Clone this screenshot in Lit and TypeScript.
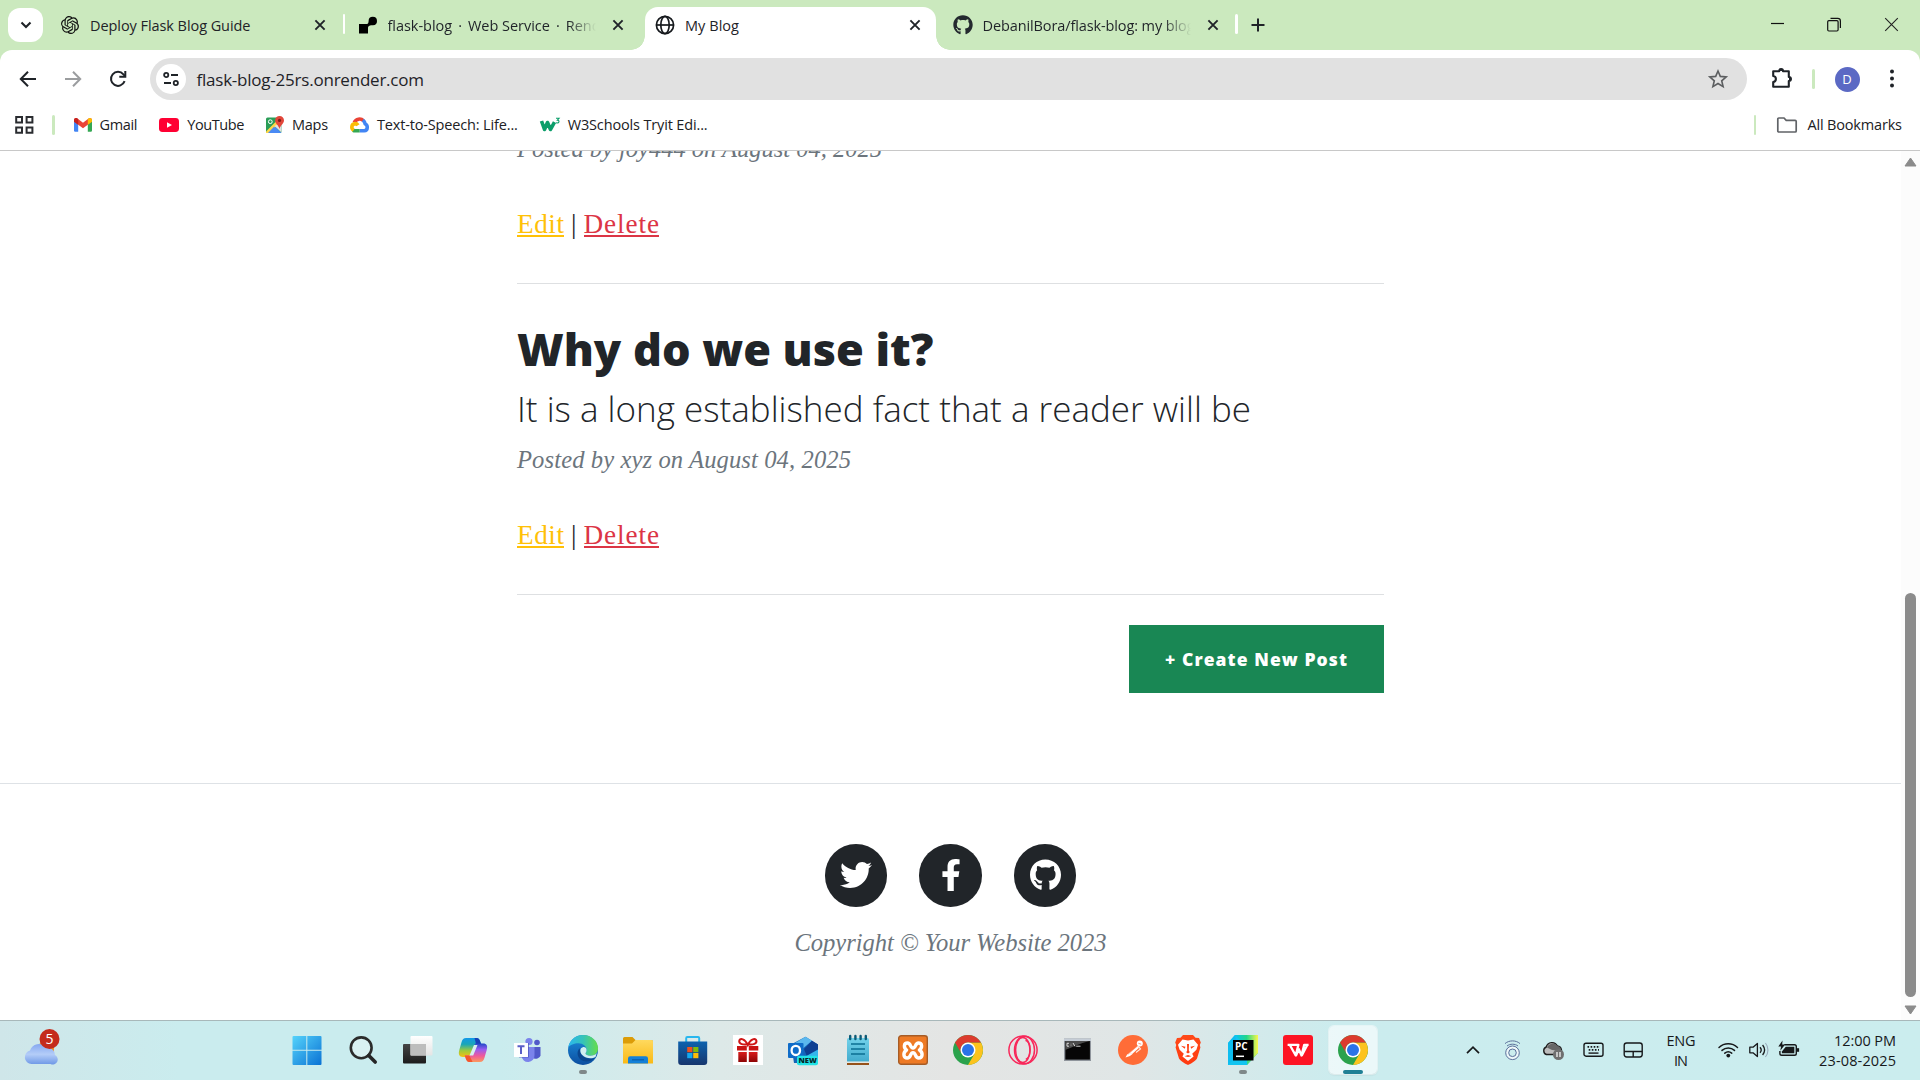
import { LitElement, html, css, svg, nothing, SVGTemplateResult } from "lit";
import { customElement } from "lit/decorators.js";

const GITHUB =
  "M165.9 397.4c0 2-2.3 3.6-5.2 3.6-3.3.3-5.6-1.3-5.6-3.6 0-2 2.3-3.6 5.2-3.6 3-.3 5.6 1.3 5.6 3.6zm-31.1-4.5c-.7 2 1.3 4.3 4.3 4.9 2.6 1 5.6 0 6.2-2s-1.3-4.3-4.3-5.2c-2.6-.7-5.5.3-6.2 2.3zm44.2-1.7c-2.9.7-4.9 2.6-4.6 4.9.3 2 2.9 3.3 5.9 2.6 2.9-.7 4.9-2.6 4.6-4.6-.3-1.9-3-3.2-5.9-2.9zM244.8 8C106.1 8 0 113.3 0 252c0 110.9 69.8 205.8 169.5 239.2 12.8 2.3 17.3-5.6 17.3-12.1 0-6.2-.3-40.4-.3-61.4 0 0-70 15-84.7-29.8 0 0-11.4-29.1-27.8-36.6 0 0-22.9-15.7 1.6-15.4 0 0 24.9 2 38.6 25.8 21.9 38.6 58.6 27.5 72.9 20.9 2.3-16 8.8-27.1 16-33.7-55.9-6.2-112.3-14.3-112.3-110.5 0-27.5 7.6-41.3 23.6-58.9-2.6-6.5-11.1-33.3 2.6-67.9 20.9-6.5 69 27 69 27 20-5.6 41.5-8.5 62.8-8.5s42.8 2.9 62.8 8.5c0 0 48.1-33.6 69-27 13.7 34.7 5.2 61.4 2.6 67.9 16 17.7 25.8 31.5 25.8 58.9 0 96.5-58.9 104.2-114.8 110.5 9.2 7.9 17 22.9 17 46.4 0 33.7-.3 75.4-.3 83.6 0 6.5 4.6 14.4 17.3 12.1C428.2 457.8 496 362.9 496 252 496 113.3 383.5 8 244.8 8z";
const TWITTER =
  "M459.37 151.716c.325 4.548.325 9.097.325 13.645 0 138.72-105.583 298.558-298.558 298.558-59.452 0-114.68-17.219-161.137-47.106 8.447.974 16.568 1.299 25.34 1.299 49.055 0 94.213-16.568 130.274-44.832-46.132-.975-84.792-31.188-98.112-72.772 6.498.974 12.995 1.624 19.818 1.624 9.421 0 18.843-1.3 27.614-3.573-48.081-9.747-84.143-51.98-84.143-102.985v-1.299c13.969 7.797 30.214 12.67 47.431 13.319-28.264-18.843-46.781-51.005-46.781-87.391 0-19.492 5.197-37.36 14.294-52.954 51.655 63.675 129.3 105.258 216.365 109.807-1.624-7.797-2.599-15.918-2.599-24.04 0-57.828 46.782-104.934 104.934-104.934 30.213 0 57.502 12.67 76.67 33.137 23.715-4.548 46.456-13.32 66.599-25.34-7.798 24.366-24.366 44.833-46.132 57.827 21.117-2.273 41.584-8.122 60.426-16.243-14.292 20.791-32.161 39.308-52.628 54.253z";
const FACEBOOK =
  "M279.14 288l14.22-92.66h-88.91v-60.13c0-25.35 12.42-50.06 52.24-50.06h40.42V6.26S260.43 0 225.36 0c-73.22 0-121.08 44.38-121.08 124.72v70.62H22.89V288h81.39v224h100.17V288z";
const OPENAI =
  "M22.2819 9.8211a5.9847 5.9847 0 0 0-.5157-4.9108 6.0462 6.0462 0 0 0-6.5098-2.9A6.0651 6.0651 0 0 0 4.9807 4.1818a5.9847 5.9847 0 0 0-3.9977 2.9 6.0462 6.0462 0 0 0 .7427 7.0966 5.98 5.98 0 0 0 .511 4.9107 6.051 6.051 0 0 0 6.5146 2.9001A5.9847 5.9847 0 0 0 13.2599 24a6.0557 6.0557 0 0 0 5.7718-4.2058 5.9894 5.9894 0 0 0 3.9977-2.9001 6.0557 6.0557 0 0 0-.7475-7.0729zm-9.022 12.6081a4.4755 4.4755 0 0 1-2.8764-1.0408l.1419-.0804 4.7783-2.7582a.7948.7948 0 0 0 .3927-.6813v-6.7369l2.02 1.1686a.071.071 0 0 1 .038.052v5.5826a4.504 4.504 0 0 1-4.4945 4.4944zm-9.6607-4.1254a4.4708 4.4708 0 0 1-.5346-3.0137l.142.0852 4.783 2.7582a.7712.7712 0 0 0 .7806 0l5.8428-3.3685v2.3324a.0804.0804 0 0 1-.0332.0615L9.74 19.9502a4.4992 4.4992 0 0 1-6.1408-1.6464zM2.3408 7.8956a4.485 4.485 0 0 1 2.3655-1.9728V11.6a.7664.7664 0 0 0 .3879.6765l5.8144 3.3543-2.0201 1.1685a.0757.0757 0 0 1-.071 0l-4.8303-2.7865A4.504 4.504 0 0 1 2.3408 7.872zm16.5963 3.8558L13.1038 8.364 15.1192 7.2a.0757.0757 0 0 1 .071 0l4.8303 2.7913a4.4944 4.4944 0 0 1-.6765 8.1042v-5.6772a.79.79 0 0 0-.407-.667zm2.0107-3.0231l-.142-.0852-4.7735-2.7818a.7759.7759 0 0 0-.7854 0L9.409 9.2297V6.8974a.0662.0662 0 0 1 .0284-.0615l4.8303-2.7866a4.4992 4.4992 0 0 1 6.6802 4.66zM8.3065 12.863l-2.02-1.1638a.0804.0804 0 0 1-.038-.0567V6.0742a4.4992 4.4992 0 0 1 7.3757-3.4537l-.142.0805L8.704 5.459a.7948.7948 0 0 0-.3927.6813zm1.0976-2.3654l2.602-1.4998 2.6069 1.4998v2.9994l-2.5974 1.4997-2.6067-1.4997Z";

const icon = (w: number, h: number, box: string, body: unknown) =>
  html`<svg width=${w} height=${h} viewBox=${box} fill="none">${body}</svg>`;

/** Text whose tracking is adjusted so that it spans the given width. */
const fit = (text: string, width: number) =>
  html`<span class="fit" data-w=${width}>${text}</span>`;

const grad = (id: string, stops: string[], x2 = 0, y2 = 1) => svg`
  <linearGradient id=${id} x1="0" y1="0" x2=${x2} y2=${y2}>
    ${stops.map((c, i) => svg`<stop offset=${i / (stops.length - 1)} stop-color=${c}></stop>`)}
  </linearGradient>`;

const chrome = svg`
  <g transform="scale(.6818) translate(-2 -2)">
    <circle cx="24" cy="24" r="22" fill="#2ba24c"/>
    <path d="M24 13H43.05A22 22 0 0 1 24 46L33.53 29.5Z" fill="#fcc31e"/>
    <path d="M4.95 13A22 22 0 0 1 43.05 13H24A11 11 0 0 0 14.47 29.5Z" fill="#dc3b2e"/>
    <circle cx="24" cy="24" r="11" fill="#fff"/><circle cx="24" cy="24" r="8.8" fill="#2a73e8"/>
  </g>`;

interface TaskApp { body: SVGTemplateResult; state?: "open" | "active" }

const apps: TaskApp[] = [
  { body: svg`${grad("win", ["#55d3fb", "#0a72d4"], 1, 1)}
    <path transform="translate(-1 0)" fill="url(#win)" d="M.5 2a1 1 0 0 1 1-1H14.3V14.8H.5ZM15.3 1H28.5a1 1 0 0 1 1 1V14.8H15.3ZM.5 15.8H14.3V30H1.5a1 1 0 0 1-1-1ZM15.3 15.8H29.5V29a1 1 0 0 1-1 1H15.3Z"/>` },
  { body: svg`<circle cx="13.2" cy="12.8" r="10.4" stroke="#2b2b2b" stroke-width="2.6" fill="#e8f6f6" fill-opacity=".5"/>
    <path d="M20.7 20.5 27.2 27" stroke="#262626" stroke-width="3.6" stroke-linecap="round"/>` },
  { body: svg`${grad("tvd", ["#454545", "#1c1c1c"])}${grad("tvl", ["#fff", "#e4e4e4"])}
    <rect x="0" y="9" width="23" height="19.5" rx="1" fill="url(#tvd)"/>
    <rect x="7.5" y="1" width="22" height="19.5" rx="1" fill="url(#tvl)"/>
    <rect x="7.5" y="9" width="15.5" height="11.5" fill="#bdbdbd"/>` },
  { body: svg`${grad("cp1", ["#1298e8", "#1aa6b8", "#9ecb3c", "#f6c012"])}${grad("cp2", ["#2049c8", "#9a5cf0", "#f05a9a", "#fb9a5c"])}
    <path d="M8 3H18.5C21 3 21.8 5 22.4 7L23.4 9.5H19C17 9.5 16.3 11 15.7 13L13 22H5C1 22 .2 19 1.3 15L3.6 7C4.4 4.3 5.6 3 8 3Z" fill="url(#cp1)"/>
    <path d="M16.5 3H18.5C21 3 21.8 5 22.6 7.5L23.5 9.5H18.2Z" fill="#1740b8"/>
    <path d="M22 27H11.5C9 27 8.3 25 7.6 23L6.8 20.5H11C13 20.5 13.7 19 14.3 17L17 8.5H25C29 8.5 29.8 11 28.7 15L26.4 23C25.6 25.7 24.4 27 22 27Z" fill="url(#cp2)"/>
    <path d="M11.5 27C9 27 8.3 25 7.6 23L6.8 20.5H11.4L14.6 27Z" fill="#f4562e"/>
    <path d="M16 10H19.5L15.2 20.5H11.5Z" fill="#d8eef2"/>` },
  { body: svg`<circle cx="16" cy="6.5" r="3.6" fill="#7b83eb"/><circle cx="24" cy="7.5" r="2.8" fill="#5059c9"/>
    <path d="M19 12H27.5V20.5A5 5 0 0 1 19 22Z" fill="#5059c9"/>
    <path d="M9.5 12H21.5V20A6.5 6.5 0 0 1 8.5 21Z" fill="#7b83eb"/>
    <path d="M3.5 8H16V22.5H6Z" fill="#4b53bc" opacity=".7"/>
    <rect x="1" y="8" width="14" height="14" fill="#fff"/>
    <path d="M4.5 11.3H11.5M8 11.3V19" stroke="#5b5fc7" stroke-width="2"/>`  },
  { state: "open", body: svg`${grad("ed1", ["#2bb8ef", "#35c3b8", "#66dd4a"], 1, 0)}${grad("ed2", ["#1b8fdd", "#0c4ea0"])}
    <circle cx="15" cy="15" r="15" fill="url(#ed2)"/>
    <path d="M.3 12.5C1.5 5 7.5 0 15 0 23.5 0 30 6 30 13.2 30 18 26.7 20.8 22.5 20.8 19.6 20.8 17.5 19.8 17.5 18.6 17.5 17.6 18.6 17.3 18.6 15 18.6 11.3 14.9 8.3 10.6 8.3 6 8.3 2 10 .3 12.5Z" fill="url(#ed1)"/>
    <path d="M11.8 13.2C9.6 15 9 18 10 21 11.7 26 17.5 27.8 24 25.2L28 22C26 24 24 23.6 20.8 23.4 15.6 23 12 19.5 11.8 13.2Z" fill="#0a468f"/>
    <path d="M18.6 15C18.6 17.3 17.5 17.6 17.5 18.6 17.5 19.8 19.6 20.8 22.5 20.8 25 20.8 27.4 19.8 28.8 18.1L27.5 22C23.5 24.3 17.7 23.5 14.3 20 11.5 17 11.8 12.8 14.8 12.2 17 11.8 18.6 13 18.6 15Z" fill="#d0eef0"/>` },
  { body: svg`${grad("fx", ["#ffd95e", "#f9b916"])}
    <path d="M0 3.5a1.5 1.5 0 0 1 1.5-1.5H9.5L12.5 5H28.5a1.5 1.5 0 0 1 1.5 1.5V12H0Z" fill="#dc9c08"/>
    <path d="M0 8.5H9L12.5 5H28.5A1.5 1.5 0 0 1 30 6.5V28.5H0Z" fill="url(#fx)"/>
    <path d="M5 28.5V23.5A2.2 2.2 0 0 1 7.2 21.3H22.8A2.2 2.2 0 0 1 25 23.5V28.5Z" fill="#1480d8"/>
    <path d="M9 24.8H21" stroke="#0b5ba8" stroke-width="1.2"/>` },
  { body: svg`${grad("st", ["#0d62ae", "#17366e"])}
    <path d="M8.2 7V3.2A1.2 1.2 0 0 1 9.4 2H20A1.2 1.2 0 0 1 21.2 3.2V7" stroke="#28b7ee" stroke-width="2"/>
    <path d="M.2 6.5H29.2V27A3 3 0 0 1 26.2 30H3.2A3 3 0 0 1 .2 27Z" fill="url(#st)"/>
    <path d="M9.2 12H14.4V17.2H9.2Z" fill="#f1511b"/><path d="M15.2 12H20.4V17.2H15.2Z" fill="#80bb0a"/>
    <path d="M9.2 18H14.4V23.2H9.2Z" fill="#14a9f0"/><path d="M15.2 18H20.4V23.2H15.2Z" fill="#fcbc09"/>` },
  { body: svg`${grad("gf", ["#d81c1c", "#8d0505"])}<rect width="30" height="30" fill="#fff"/>
    <path d="M14.8 10C12 3.5 7 2.8 6.3 5.8 5.7 8.5 9 10 14.8 9.2 20.5 10 24 8.5 23.4 5.8 22.6 2.8 17.6 3.5 14.8 10Z" stroke="#cf1616" stroke-width="2"/>
    <path d="M4 11H13.8V15.5H4ZM15.8 11H25.3V15.5H15.8Z" fill="#c91414"/>
    <path d="M5.3 17H13.8V27H5.3ZM15.8 17H24.5V27H15.8Z" fill="url(#gf)"/>` },
  { body: svg`<path d="M3 9.5 17.5 1.8 30 9.5V25A3 3 0 0 1 27 28H6Z" fill="#1565b8"/>
    <path d="M7 8 17.5 1.8 24 5.8 13 15Z" fill="#5ab8ee"/><path d="M16 14 24 5.8 30 9.5V17L20 24Z" fill="#0d3f92"/>
    <path d="M13 24 30 14.5V28H13Z" fill="#35b5ec"/>
    <rect x="0" y="8" width="15.5" height="15" rx="1" fill="#0f6cc8"/>
    <ellipse cx="7.8" cy="15.4" rx="4.2" ry="4.6" stroke="#fff" stroke-width="2.3"/>
    <rect x="9" y="20.8" width="21" height="9.4" rx="2" fill="#22e3e6"/>
    <text x="19.6" y="28.2" class="tiny" text-anchor="middle">NEW</text>` },
  { body: svg`${grad("np", ["#73d2ea", "#3fa9cc"])}
    <rect x="4" y="3" width="22" height="25" rx="1.5" fill="url(#np)"/>
    <path d="M7.2 1V4M12.4 1V4M17.6 1V4M22.8 1V4" stroke="#0d5b77" stroke-width="2.4" stroke-linecap="round"/>
    <path d="M8 9H22M8 14H22M8 19H22" stroke="#0b6f92" stroke-width="1.6"/>
    <path d="M4 27.2H26" stroke="#f3efe6" stroke-width="1.4"/><path d="M4 29H26" stroke="#96521a" stroke-width="2"/>` },
  { body: svg`<rect x=".7" y=".7" width="28.6" height="28.6" rx="2.6" fill="#ee7a25" stroke="#a65c26" stroke-width="1.4"/>
    <path d="M9.6 8C5.6 8 5.4 12.6 8.6 15 4.8 17.4 5 23 9.4 23 13 23 12 17.8 15 17.8 18 17.8 17 23 20.6 23 25 23 25.2 17.4 21.4 15 24.6 12.6 24.4 8 20.4 8 17 8 18 13 15 13 12 13 13 8 9.6 8Z" stroke="#fff" stroke-width="3.4" stroke-linejoin="round"/>` },
  { body: chrome },
  { body: svg`<g stroke="#f8285a" stroke-width="1.5"><circle cx="15" cy="15" r="14.1"/><ellipse cx="16.5" cy="15" rx="10" ry="13.8"/><ellipse cx="14.8" cy="15" rx="7.2" ry="12.4"/><path d="M17.5 5.2C23.5 7 23.5 22 17.8 24.4"/></g>` },
  { body: svg`<rect x="1" y="3.5" width="27" height="22.5" fill="#8f959c"/><rect x="1" y="3.5" width="27" height="2.5" fill="#c5cdd6"/>
    <rect x="2.3" y="6" width="24.6" height="18.6" fill="#060606"/><path d="M2.3 6H26.9C16 8.5 10 12 2.3 15Z" fill="#4b4b4b"/>
    <path d="M6 8.3H4V11.2H6M8 8.8V9.3M8 10.6V11.1M10 8L12 11.4M13.2 11.2H17.5" stroke="#e6e6e6" stroke-width=".9"/>` },
  { body: svg`<circle cx="15" cy="15" r="15" fill="#ff6c37"/>
    <path d="M19.5 11 9 19.8 7.5 22.6 12 21 21 12.8Z" fill="#fff"/><circle cx="21.8" cy="8.4" r="3" fill="#fff"/>
    <path d="M20 10.8 22.5 14 18 17.5M12.5 18.2 14 19.5" stroke="#ffe9e0" stroke-width="1.2"/><path d="M19.5 11 10 19.3" stroke="#ff6c37" stroke-width=".5"/><path d="M20.4 8.3 23.2 9.2" stroke="#ff6c37" stroke-width=".7"/>` },
  { body: svg`${grad("br", ["#ff4a1a", "#ff3a10"])}
    <path d="M10 0H20L22.5 2.8 26 3 27.8 7.5 26.8 10 27.4 12.6 24 23.5C23.2 25.3 17 29.4 15 30 13 29.4 6.8 25.3 6 23.5L2.6 12.6 3.2 10 2.2 7.5 4 3 7.5 2.8Z" fill="url(#br)"/>
    <path d="M9.5 4.5 15 5.6 20.5 4.5 25 9.8 23.4 14.8 19.2 18.8 20.6 21.5 15 26 9.4 21.5 10.8 18.8 6.6 14.8 5 9.8Z" fill="#fff"/>
    <path d="M8 10.8 12.5 11.8 11.7 13.8ZM22 10.8 17.5 11.8 18.3 13.8ZM14 9H16L15.8 15.5 16.8 17.3 15 18.5 13.2 17.3 14.2 15.5ZM11.6 21.2 15 20 18.4 21.2 15 22Z" fill="#ff4316"/>` },
  { state: "open", body: svg`${grad("pc", ["#07c3f2", "#21d789", "#fcf84a"], 1, 0)}
    <path d="M7 0H30V18L19 30H0V8Z" fill="#12c4f0"/><path d="M7 0H30V18L19 30V12Z" fill="url(#pc)"/><path d="M7 0 0 8V30L8 22V5Z" fill="#0cbdf0"/>
    <rect x="5" y="5" width="20.5" height="20.5" fill="#000"/>
    <text x="7" y="15" class="pc">PC</text><path d="M8 21.3H16" stroke="#fff" stroke-width="1.5"/>` },
  { body: svg`<rect width="30" height="30" rx="3" fill="#fd1424"/>
    <path d="M4.6 9.8H15.4L12.7 20.5 7 10.2M15.8 14.6 12.9 20.8M25.6 9.8H21.2L18.5 20.5 15.5 13.5M18.8 20.5 24.4 9.8" stroke="#fff" stroke-width="2.3" stroke-linejoin="round"/>` },
  { state: "active", body: chrome },
];

interface Tab { title: string; width: number; fade: boolean; active: boolean; fav: unknown }

const tabs: Tab[] = [
  { title: "Deploy Flask Blog Guide", width: 160.5, fade: false, active: false, fav: icon(18, 18, "0 0 24 24", svg`<path fill="#111" d=${OPENAI}/>`) },
  { title: "flask-blog \u2009·\u2009 Web Service \u2009·\u2009 Rend", width: 213, fade: true, active: false,
    fav: icon(18, 18, "0 0 18 18", svg`<path d="M0 8H7.2C9 8 9.6 7 9.6 4.9A4.2 4.2 0 1 1 14 9.2C11 9.2 9 9.6 9 11.6V17.5H0Z" fill="#000"/>`) },
  { title: "My Blog", width: 54, fade: false, active: true,
    fav: icon(20, 20, "0 0 20 20", svg`<g stroke="#16191d" stroke-width="1.7"><circle cx="10" cy="10" r="8.6"/><ellipse cx="10" cy="10" rx="4.2" ry="8.6"/><path d="M1.5 10H18.5"/></g>`) },
  { title: "DebanilBora/flask-blog: my blog", width: 212, fade: true, active: false,
    fav: icon(20, 20, "0 0 496 512", svg`<path fill="#24292f" d=${GITHUB}/>`) },
];

const bookmarks = [
  { label: "Gmail", w: 38, iw: 18, body: svg`<path d="M0 4V14.5A1.2 1.2 0 0 0 1.2 15.7H4.2V7Z" fill="#4285f4"/><path d="M18 4V14.5A1.2 1.2 0 0 1 16.8 15.7H13.8V7Z" fill="#34a853"/><path d="M0 4C0 2 2 1.4 3.4 2.4L9 6.7 14.6 2.4C16 1.4 18 2 18 4L17.8 5.8 9 12.2.2 5.8Z" fill="#ea4335"/><path d="M13.8 3 14.6 2.4C16 1.4 18 2 18 4V5.7L13.8 8.8Z" fill="#fbbc04"/><path d="M0 4C0 2 2 1.4 3.4 2.4L4.2 3V8.8L0 5.7Z" fill="#c5221f"/>` },
  { label: "YouTube", w: 57, iw: 20, body: svg`<rect y="2" width="20" height="14" rx="3.4" fill="#f03"/><path d="M8 6.2V11.8L13 9Z" fill="#fff"/>` },
  { label: "Maps", w: 36, iw: 18, body: svg`<rect y="1.5" width="15.5" height="15.5" rx="1.5" fill="#2a9d57"/><path d="M0 17 8 9.5 15.5 17Z" fill="#4a8af4"/><path d="M0 15.5 13 2.5 15.5 5 3 17H0Z" fill="#fdd649"/><path d="M8.5 10 15.5 6V16.5Z" fill="#dfe1e4"/><path d="M2 16.9 8 10.8 14 17Z" fill="#4a8af4"/><circle cx="4.3" cy="5.7" r="1.9" stroke="#fff" stroke-width="1"/><path d="M13.5 0A4.4 4.4 0 0 1 18 4.5C18 7.5 14.5 9 13.5 13 12.5 9 9.1 7.5 9.1 4.5A4.4 4.4 0 0 1 13.5 0Z" fill="#e2463a"/><circle cx="13.5" cy="4.4" r="1.6" fill="#7e1e17"/>` },
  { label: "Text-to-Speech: Life...", w: 141, iw: 19, body: svg`<g stroke-width="3.6"><path d="M4.3 6.5A5.6 5.6 0 0 1 13.5 4.8" stroke="#ea4335"/><path d="M12.8 4.3A5.5 5.5 0 0 1 15.2 7.8C18 9 18.2 14.6 14.2 14.8H9.7" stroke="#4285f4"/><path d="M9.7 14.8H5.2A3.6 3.6 0 0 1 3 14.2" stroke="#34a853"/><path d="M3.6 14.3C.8 12.3 1.4 8 5 7.6 6.5 7.6 7.4 8.2 8 9.2" stroke="#fbbc04"/></g>` },
  { label: "W3Schools Tryit Edi...", w: 140, iw: 20, body: svg`<path d="M1.5 5 4.5 13.5 7.5 6.5 10.5 13.5 14.5 6.2" stroke="#0b9e6a" stroke-width="3.6" stroke-linejoin="round"/><path d="M16 2.2H19.1L17.4 4.2C19.7 4.2 19.7 7.6 15.9 6.8" stroke="#0b9e6a" stroke-width="1.1"/>` },
];

const closeX = icon(16, 16, "0 0 16 16", svg`<path d="M3.4 3.4 12.6 12.6M12.6 3.4 3.4 12.6" stroke="#1f2328" stroke-width="1.9"/>`);

@customElement("app-root")
export class AppRoot extends LitElement {
  static styles = css`
    :host { display: block; width: 1920px; height: 1080px; overflow: hidden; background: #fff; color: #1f2328;
      font-family: "Open Sans", "Noto Sans", sans-serif; font-size: 14.5px; }
    * { box-sizing: border-box; }
    svg { display: block; flex: none; overflow: visible; }
    .screen { display: flex; flex-direction: column; height: 1080px; }
    .fit { display: inline-block; white-space: pre; }

    .strip { display: flex; height: 50px; background: #cbe9be; padding-left: 8px; }
    .search { width: 35px; height: 34px; margin: 8px 7px 0 0; border-radius: 12px; background: #fff; display: grid; place-items: center; }
    .tab { position: relative; display: flex; align-items: center; width: 290.5px; height: 43px; margin-top: 7px; padding: 0 0 7px 10px; }
    .fav { width: 20px; display: grid; place-items: center; margin-right: 10px; }
    .label { width: 208px; overflow: hidden; margin-right: 14px; padding-top: 2px; line-height: 22px; white-space: nowrap; }
    .fade { -webkit-mask-image: linear-gradient(90deg, #000 180px, transparent 208px); mask-image: linear-gradient(90deg, #000 180px, transparent 208px); }
    .active { background: #fff; border-radius: 13px 13px 0 0; }
    .active::before, .active::after { content: ""; position: absolute; bottom: 0; width: 14px; height: 14px; }
    .active::before { left: -14px; background: radial-gradient(circle at 0 0, transparent 13.5px, #fff 14px); }
    .active::after { right: -14px; background: radial-gradient(circle at 100% 0, transparent 13.5px, #fff 14px); }
    .sep { width: 7px; padding-top: 14px; display: flex; justify-content: center; }
    .bar { width: 2.5px; height: 20px; border-radius: 2px; background: #fff; }
    .newtab { margin: 18px 0 0 11px; }
    .controls { display: flex; margin: 17px 21px 0 auto; gap: 42px; }

    .toolwrap { background: #cbe9be; }
    .toolbar { height: 58px; padding: 8px 17px 0 17px; background: #fff; border-radius: 12px 12px 0 0; display: flex; align-items: flex-start; }
    .nav { display: flex; gap: 25px; padding: 11px 0 0 .5px; width: 133px; }
    .omni { width: 1597px; height: 42px; border-radius: 21px; background: #e1e1e1; display: flex; align-items: center; padding: 0 19.5px 0 6px; }
    .chip { width: 30px; height: 30px; border-radius: 50%; background: #fff; display: grid; place-items: center; margin-right: 10.5px; }
    .url { flex: 1; font-size: 17px; line-height: 26px; padding-top: 1px; }
    .right { display: flex; align-items: center; height: 42px; }
    .green { background: #cbe9be; width: 2.5px; }
    .ext { margin: 0 19.5px 2px 23.5px; }
    .avatar { width: 25px; height: 25px; border-radius: 50%; background: #5b69c4; color: #fff; font-size: 13px; line-height: 25px; text-align: center; margin: 0 30.5px 0 20px; }

    .marks { height: 43px; background: #fff; border-bottom: 1px solid #c8c8c8; display: flex; align-items: center; padding: 0 18px 8px 15px; color: #202124; }
    .marks .first { margin: 0 19px 0 18px; }
    .mark { display: flex; align-items: center; margin-right: 21.8px; line-height: 22px; }
    .mark svg { margin-right: 8px; }
    .all { margin-left: auto; display: flex; align-items: center; line-height: 22px; }
    .all svg { margin: 0 10.5px 0 21px; }

    .view { display: flex; height: 869px; }
    .page { width: 1901px; height: 869px; overflow: hidden; font-family: "Liberation Serif", serif; }
    .col { width: 867px; margin-left: 517px; }
    .meta { height: 38px; line-height: 38px; font-size: 24.6px; font-style: italic; color: #6c757d; }
    .clipped { margin-top: -21px; }
    .actions { height: 40px; line-height: 40px; margin: 36px 0 39px; font-size: 27.2px; color: #212529; display: flex; }
    .edit { color: #ffc107; }
    .del { color: #dc3545; }
    .link { position: relative; display: block; height: 40px; }
    .link::after { content: ""; position: absolute; left: 0; right: 0; top: 31px; height: 2px; background: currentColor; }
    .pipe { width: 19.5px; display: flex; justify-content: center; }
    .rule { height: 1px; background: #dee0e2; }
    .title { margin: 38px 0 0; height: 54px; font: 800 45px/54px "Open Sans", sans-serif; color: #212529; }
    .sub { margin: 11px 0 10px; font: 300 35px/44px "Open Sans", sans-serif; color: #212529; }
    .create { width: 255px; height: 68px; margin: 30px 0 0 auto; background: #198754; color: #fff; font: 800 17.5px/68px "Open Sans", sans-serif; padding-left: 36px; }
    .foot { margin-top: 90px; border-top: 1px solid #dee2e6; display: flex; flex-direction: column; align-items: center; padding-top: 60px; }
    .social { display: flex; gap: 32px; }
    .disc { width: 62.5px; height: 62.5px; border-radius: 50%; background: #212529; display: grid; place-items: center; }
    .copy { margin-top: 17.5px; }
    .scroll { width: 19px; background: #fcfcfc; display: flex; flex-direction: column; align-items: center; padding-top: 6px; }
    .thumb { width: 11px; height: 404px; border-radius: 6px; background: #8b8b8b; margin: 426px 0 8px; }

    .task { height: 60px; border-top: 1px solid #a8b8ba; display: flex; align-items: flex-start; color: #17191b;
      background: linear-gradient(90deg, #cfe6e9 0, #caecee 180px, #caecee 500px, #dde9e8 720px, #e4e5e4 950px, #e0e6e6 1130px, #cbecee 1340px, #cbedee 100%); }
    .weather { margin: 6px 220.8px 0 24px; }
    .slot { width: 55px; height: 59px; padding-top: 5px; display: flex; justify-content: center; }
    .cell { width: 48px; height: 48px; border-radius: 5px; padding: 9px 9px 0; }
    .on { background: rgba(255,255,255,.62); box-shadow: 0 0 0 1px rgba(255,255,255,.5), 0 1px 2px rgba(0,0,0,.12); }
    .pill { width: 8px; height: 4px; border-radius: 2px; background: #7f8889; margin: 5px auto 0; }
    .pill.wide { width: 20px; background: #1f8095; }
    .tiny { font: 800 7.6px "Open Sans", sans-serif; fill: #06282c; }
    .pc { font: 700 10px "Open Sans", sans-serif; fill: #fff; }
    .badge { font: 400 14px "Open Sans", sans-serif; fill: #fff; }
    .tray { flex: 1; display: flex; margin-left: 82.2px; padding-top: 19px; }
    .lang { width: 56px; text-align: center; margin: -9px 0 0 0; line-height: 20px; }
    .clock { margin: -9px 24px 0 auto; text-align: right; line-height: 20px; }
  `;

  firstUpdated() {
    // Spread each label's tracking over its characters to reach the set width.
    this.renderRoot.querySelectorAll<HTMLElement>(".fit").forEach((el) => {
      const n = (el.textContent ?? "").length;
      const natural = el.getBoundingClientRect().width;
      const step = (Number(el.dataset.w) - natural) / Math.max(1, n - 1);
      el.style.letterSpacing = `${step.toFixed(3)}px`;
      el.style.marginRight = `${(-step).toFixed(3)}px`;
    });
  }

  private actions() {
    return html`<div class="actions">
      <a class="link edit">${fit("Edit", 47)}</a><span class="pipe">|</span><a class="link del">${fit("Delete", 75.5)}</a>
    </div>`;
  }

  render() {
    return html`<div class="screen">
      <div class="strip">
        <div class="search">${icon(12, 8, "0 0 12 8", svg`<path d="M1.5 1.5 6 6 10.5 1.5" stroke="#1f2328" stroke-width="2.1"/>`)}</div>
        ${tabs.map((t, i) => html`
          <div class="tab ${t.active ? "active" : ""}">
            <span class="fav">${t.fav}</span>
            <span class="label ${t.fade ? "fade" : ""}">${fit(t.title, t.width)}</span>
            ${closeX}
          </div>
          <div class="sep">${i === 0 || i === 3 ? html`<span class="bar"></span>` : nothing}</div>`)}
        <div class="newtab">${icon(14, 14, "0 0 14 14", svg`<path d="M7 .5V13.5M.5 7H13.5" stroke="#1f2328" stroke-width="2"/>`)}</div>
        <div class="controls">
          ${icon(15, 15, "0 0 15 15", svg`<path d="M1 6.5H14" stroke="#111" stroke-width="1.2"/>`)}
          ${icon(15, 15, "0 0 15 15", svg`<rect x=".7" y="3.6" width="10.4" height="10.4" rx="1.2" stroke="#111" stroke-width="1.2"/><path d="M3.5 1.4H10.8A2.6 2.6 0 0 1 13.4 4V11" stroke="#111" stroke-width="1.2"/>`)}
          ${icon(15, 15, "0 0 15 15", svg`<path d="M1.2 1.2 13.8 13.8M13.8 1.2 1.2 13.8" stroke="#222" stroke-width="1.1"/>`)}
        </div>
      </div>

      <div class="toolwrap"><div class="toolbar">
        <div class="nav">
          ${icon(20, 20, "0 0 20 20", svg`<path d="M18 10H3M10 2.8 2.8 10 10 17.2" stroke="#1f2328" stroke-width="2"/>`)}
          ${icon(20, 20, "0 0 20 20", svg`<path d="M2 10H17M10 2.8 17.2 10 10 17.2" stroke="#9b9d9f" stroke-width="2"/>`)}
          ${icon(20, 20, "0 0 20 20", svg`<path d="M16.6 12.2A7 7 0 1 1 15.4 5.4L17 7" stroke="#1f2328" stroke-width="2"/><path d="M17.3 2V7.8H11.3" stroke="#1f2328" stroke-width="2"/>`)}
        </div>
        <div class="omni">
          <span class="chip">${icon(16, 14, "0 0 16 14", svg`<g stroke="#1f2328" stroke-width="1.8"><circle cx="3.2" cy="3" r="2.1"/><path d="M8 3H15M1 11H8"/><circle cx="12.8" cy="11" r="2.1"/></g>`)}</span>
          <span class="url">${fit("flask-blog-25rs.onrender.com", 227.5)}</span>
          ${icon(20, 20, "0 0 20 20", svg`<path d="M10 2 12.3 7.4 18.2 7.9 13.7 11.8 15.1 17.6 10 14.5 4.9 17.6 6.3 11.8 1.8 7.9 7.7 7.4Z" stroke="#5c5e60" stroke-width="1.6"/>`)}
        </div>
        <div class="right">
          <span class="ext">${icon(22, 22, "0 0 22 22", svg`<path d="M2.2 4.2H8.2C8.2 1.4 12 1.4 12 4.2H17.8V10C20.6 10 20.6 14 17.8 14V19.8H2.2V15C5.8 14.6 5.8 9.4 2.2 9Z" stroke="#1f2328" stroke-width="2.1" stroke-linejoin="round"/><path d="M8 4C8 1 12.2 1 12.2 4ZM18 9.8C21.2 9.8 21.2 14.2 18 14.2Z" fill="#1f2328"/>`)}</span>
          <span class="bar green"></span>
          <span class="avatar">D</span>
          ${icon(4, 20, "0 0 4 20", svg`<circle cx="2" cy="2.6" r="2" fill="#1f2328"/><circle cx="2" cy="9.5" r="2" fill="#1f2328"/><circle cx="2" cy="16.4" r="2" fill="#1f2328"/>`)}
        </div>
      </div></div>

      <div class="marks">
        ${icon(19, 18, "0 0 19 18", svg`<g stroke="#2a2c30" stroke-width="2"><path d="M1.2 1H7V6.4H1.2ZM11.6 1H17.4V6.4H11.6ZM1.2 11.4H7V16.8H1.2ZM11.6 11.4H17.4V16.8H11.6Z"/></g>`)}
        <span class="bar green first"></span>
        ${bookmarks.map((b) => html`<span class="mark">${icon(b.iw, 18, `0 0 ${b.iw} 18`, b.body)}${fit(b.label, b.w)}</span>`)}
        <span class="all"><span class="bar green"></span>
          ${icon(20, 16, "0 0 20 16", svg`<path d="M1.8 1H7L9.2 3.4H18.2A1 1 0 0 1 19.2 4.4V14A1 1 0 0 1 18.2 15H1.8A1 1 0 0 1 .8 14V2A1 1 0 0 1 1.8 1Z" stroke="#606367" stroke-width="1.7"/>`)}
          ${fit("All Bookmarks", 94.5)}</span>
      </div>

      <div class="view">
        <div class="page">
          <div class="col">
            <div class="meta clipped">${fit("Posted by joy444 on August 04, 2025", 365)}</div>
            ${this.actions()}
            <div class="rule"></div>
            <h2 class="title">${fit("Why do we use it?", 416.5)}</h2>
            <h3 class="sub">${fit("It is a long established fact that a reader will be", 734)}</h3>
            <div class="meta">${fit("Posted by xyz on August 04, 2025", 334)}</div>
            ${this.actions()}
            <div class="rule"></div>
            <div class="create">${fit("+ Create New Post", 182)}</div>
          </div>
          <div class="foot">
            <div class="social">
              <span class="disc">${icon(32, 32, "0 0 512 512", svg`<path fill="#fff" d=${TWITTER}/>`)}</span>
              <span class="disc">${icon(20, 32, "0 0 320 512", svg`<path fill="#fff" d=${FACEBOOK}/>`)}</span>
              <span class="disc">${icon(31, 32, "0 0 496 512", svg`<path fill="#fff" d=${GITHUB}/>`)}</span>
            </div>
            <div class="meta copy">${fit("Copyright © Your Website 2023", 312)}</div>
          </div>
        </div>
        <div class="scroll">
          ${icon(13, 10, "0 0 13 10", svg`<path d="M6.5 1 12 9H1Z" fill="#8b8b8b" stroke="#8b8b8b" stroke-linejoin="round"/>`)}
          <span class="thumb"></span>
          ${icon(13, 10, "0 0 13 10", svg`<path d="M6.5 9 12 1H1Z" fill="#8b8b8b" stroke="#8b8b8b" stroke-linejoin="round"/>`)}
        </div>
      </div>

      <div class="task">
        <div class="weather">${icon(36, 40, "0 0 36 40", svg`${grad("cl", ["#86a8f0", "#b4cdf8", "#6e98e6"])}
          <circle cx="22" cy="22" r="8" fill="#f08a1c"/>
          <path d="M7.5 37A6.8 6.8 0 0 1 6 23.6 9.2 9.2 0 0 1 22 20.5 8 8 0 0 1 31 28 5 5 0 0 1 26.5 37Z" fill="url(#cl)"/>
          <circle cx="25.5" cy="12" r="10" fill="#c42b1c"/><text x="25.5" y="17" class="badge" text-anchor="middle">5</text>`)}</div>
        ${apps.map((a) => html`<div class="slot"><div class="cell ${a.state === "active" ? "on" : ""}">
          ${icon(30, 30, "0 0 30 30", a.body)}
          ${a.state ? html`<div class="pill ${a.state === "active" ? "wide" : ""}"></div>` : nothing}</div></div>`)}
        <div class="tray">
          ${icon(20, 20, "0 0 20 20", svg`<path d="M4 13.2 10 7.2 16 13.2" stroke="#17191b" stroke-width="1.7"/>`)}
          ${icon(49, 20, "-19 0 49 20", svg`<g stroke="#5b6f9a" stroke-width="1"><circle cx="10.5" cy="12.8" r="6.8" fill="#eef8fa"/><circle cx="10.5" cy="12.8" r="3.8" fill="#cbedee"/><path d="M3 3.6C7 0 14 0 18 3.6M5 6C8 3.6 13 3.6 16 6"/></g>`)}
          ${icon(40, 20, "-10 0 40 20", svg`<path d="M4.5 14.5A4 4 0 0 1 4.2 7 6 6 0 0 1 15.4 6 4.5 4.5 0 0 1 17 14.5Z" fill="#bcbcbc" stroke="#1d1d1d" stroke-width="1.4"/><path d="M5 7.5A6 6 0 0 1 15.4 6 4.5 4.5 0 0 1 19 11L10 10Z" fill="#666"/><circle cx="16.5" cy="14.5" r="5.5" fill="#6f6f6f"/><path d="M15 12V17M18 12V17" stroke="#fff" stroke-width="1.2"/>`)}
          ${icon(41, 20, "-11 0 41 20", svg`<rect x="1" y="3.2" width="19" height="13" rx="2" stroke="#17191b" stroke-width="1.4"/><path d="M4.5 6.9H17M5.7 9.9H16" stroke="#17191b" stroke-width="1.6" stroke-dasharray="1.6 1.5"/><path d="M5.5 13.1H15.5" stroke="#17191b" stroke-width="1.4"/>`)}
          ${icon(40, 20, "-10 0 40 20", svg`<rect x="1.2" y="3" width="18" height="14" rx="2.4" stroke="#17191b" stroke-width="1.4"/><path d="M1.2 11.5H19.2M10.2 11.5V17" stroke="#17191b" stroke-width="1.4"/>`)}
          <div class="lang">${fit("ENG", 29)}<br />${fit("IN", 14)}</div>
          ${icon(40, 20, "-9 0 40 20", svg`<g stroke="#17191b" stroke-width="1.5" stroke-linecap="round"><path d="M1 7.5A13.5 13.5 0 0 1 19.5 7.5M4 10.4A9.5 9.5 0 0 1 16.5 10.4M6.8 13.2A5.5 5.5 0 0 1 13.7 13.2"/></g><circle cx="10.3" cy="15.6" r="1.9" fill="#17191b"/>`)}
          ${icon(20, 20, "0 0 20 20", svg`<path d="M.8 7.2H4L8.4 3.4V16.6L4 12.8H.8Z" stroke="#17191b" stroke-width="1.3" stroke-linejoin="round"/><path d="M11 7.2C12.4 8.8 12.4 11.2 11 12.8M13.6 5C16 8 16 12 13.6 15" stroke="#17191b" stroke-width="1.3"/><path d="M16.4 3C19.8 7 19.8 13 16.4 17" stroke="#9ab" stroke-width="1.1"/>`)}
          ${icon(31, 20, "-9.3 0 31 20", svg`<path d="M6 4.8H16.2A1.8 1.8 0 0 1 18 6.6V13.4A1.8 1.8 0 0 1 16.2 15.2H3.4A1.8 1.8 0 0 1 1.6 13.4V11" stroke="#17191b" stroke-width="1.4"/><path d="M7.5 6.8H16V13.2H3.6V11.5Z" fill="#17191b"/><path d="M18.5 8.2H20.8V11.8H18.5Z" fill="#17191b"/><path d="M4.2.5 0 6.6H2.8L2 10.8 6.8 4.4H3.9Z" fill="#17191b"/>`)}
          <div class="clock">${fit("12:00 PM", 62)}<br />${fit("23-08-2025", 77)}</div>
        </div>
      </div>
    </div>`;
  }
}
